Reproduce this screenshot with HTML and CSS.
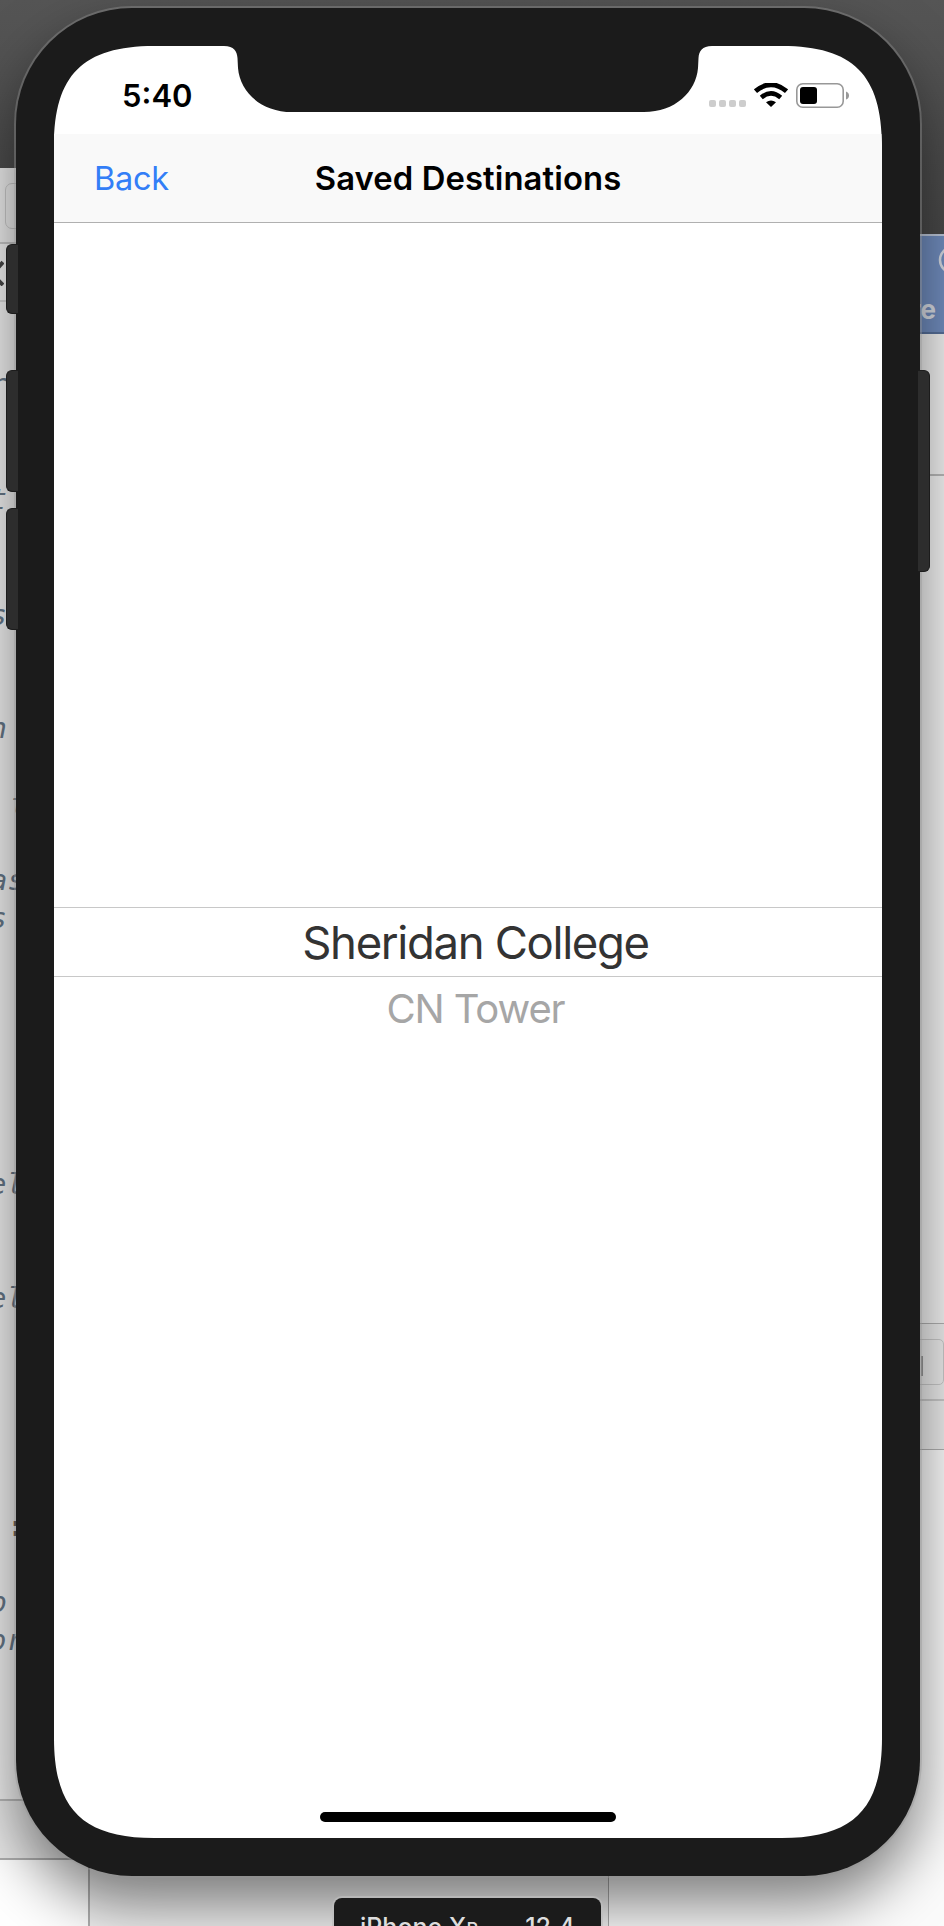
FILE: index.html
```
<!DOCTYPE html>
<html lang="en">
<head>
<meta charset="utf-8">
<title>Saved Destinations</title>
<link rel="stylesheet" href="styles.css">
</head>
<body>
<main class="desktop">
  <section class="window editor">
    <div class="editor-tools"><span class="tool-button"></span></div>
    <div class="editor-path"><svg width="8" height="26" viewBox="0 0 8 26"><path d="M7 2L0 10M0 18l7 7" fill="none" stroke="#444" stroke-width="4"/></svg></div>
    <span class="code c1">r</span><span class="code c2">t</span><span class="code c3">s</span>
    <span class="code c4">n</span><span class="code c5">t</span><span class="code c6">as</span><span class="code c7">s</span>
    <span class="code c8">el</span><span class="code c9">el</span><span class="code c10">:</span>
    <span class="code c11">o</span><span class="code c12">or</span>
  </section>
  <section class="window debug"></section>
  <section class="window console"></section>
  <section class="window paper"></section>
  <section class="window browser">
    <header class="browser-head"><svg class="ring" width="30" height="30" viewBox="0 0 30 30"><circle cx="15" cy="15" r="13" fill="none" stroke="#d3d7df" stroke-width="2.5"/></svg><span>re</span></header>
    <div class="browser-strip"></div>
    <div class="browser-page"></div>
    <div class="browser-bar"><span class="bar-field"><i class="bar-mark"></i></span></div>
    <div class="browser-row"></div>
  </section>

  <i class="key mute"></i><i class="key vol-up"></i><i class="key vol-down"></i><i class="key power"></i>

  <article class="phone">
    <div class="screen">
      <div class="status">
        <time class="clock">5:40</time>
        <div class="signals">
          <span class="dots"><i></i><i></i><i></i><i></i></span>
          <svg width="34" height="24" viewBox="0 0 34 24"><path d="M1.500 8.200Q17-4.800 32.500 8.200" fill="none" stroke="#000" stroke-width="4.800"/><path d="M7.300 14.500Q17 6.300 26.700 14.500" fill="none" stroke="#000" stroke-width="4.600"/><path d="M12 19.200Q17 15.600 22 19.200L17 24z"/></svg>
          <svg class="battery" width="54" height="26" viewBox="0 0 54 26"><rect x=".8" y=".8" width="46.400" height="23.400" rx="6" fill="none" stroke="#989898" stroke-width="1.600"/><rect x="4" y="4" width="17" height="17" rx="3"/><path d="M50 8.500q3 1 3 4t-3 4z" fill="#989898"/></svg>
        </div>
      </div>
      <nav class="navbar"><a class="back">Back</a><h1 class="title">Saved Destinations</h1><span></span></nav>
      <div class="picker">
        <div class="option selected"><span>Sheridan College</span></div>
        <div class="option next"><span>CN Tower</span></div>
      </div>
      <div class="home"></div>
    </div>
  </article>
  <footer class="device-label"><span>iPhone X<small>R</small></span><span class="dash">—</span><span>12.4</span></footer>
</main>
</body>
</html>
```
FILE: styles.css
```
* { box-sizing: border-box; }
body { margin: 0; font-family: Inter, "Liberation Sans", sans-serif; }
i { display: block; }
.desktop { position: relative; width: 944px; height: 1926px; padding: 8px 24px 50px 16px; overflow: hidden; background: linear-gradient(#555, #484848 230px); }

.window { position: absolute; overflow: hidden; }
.editor { left: 0; top: 168px; width: 40px; height: 1633px; background: #f0f0f0; border-bottom: 2px solid #b8b8b8; }
.editor-tools { height: 76px; padding: 15px 0 0 5px; background: #ececec; border-bottom: 2px solid #c4c4c4; }
.tool-button { display: block; width: 60px; height: 46px; border: 1px solid #c8c8c8; border-radius: 7px; }
.editor-path { height: 58px; padding-top: 16px; margin-left: -4px; border-bottom: 2px solid #d4d4d4; }
.code { position: absolute; right: 33px; font: italic 400 29px/44px "DejaVu Sans Mono", monospace; color: #657687; }
.c1 { top: 194px; } .c2 { top: 309px; } .c3 { top: 425px; } .c4 { top: 538px; }
.c5 { top: 614px; right: 12px; } .c6 { top: 690px; right: 15px; } .c7 { top: 728px; }
.c8 { top: 994px; right: 16px; } .c9 { top: 1108px; right: 16px; }
.c10 { top: 1336px; right: 15px; color: #222; font-style: normal; font-weight: 700; }
.c11 { top: 1412px; } .c12 { top: 1450px; right: 16px; }
.debug { left: 0; top: 1801px; width: 130px; height: 59px; background: #e6e6e6; border-bottom: 2px solid #adadad; }
.console { left: 0; top: 1860px; width: 90px; height: 66px; background: #fff; border-right: 2px solid #b0b0b0; }
.paper { left: 90px; top: 1860px; width: 519px; height: 66px; background: #f0f0f0; border-right: 1px solid #aaa; }
.browser { left: 609px; top: 234px; width: 335px; height: 1692px; background: #fbfbfb; }
.browser-head { height: 100px; padding: 58px 8px 0 0; text-align: right; font: 700 26px/32px Inter, sans-serif; color: #d8dce4; background: #708cbd; border-top: 2px solid #bcc6d8; border-bottom: 2px solid #566f99; }
.ring { position: absolute; left: 329px; top: 11px; }
.browser-strip { height: 142px; background: #f0f0f0; border-bottom: 2px solid #b7b7b7; }
.browser-page { height: 848px; background: #f2f2f2; border-bottom: 1px solid #b0b0b0; }
.browser-bar { height: 77px; padding-top: 15px; background: #ececec; border-bottom: 2px solid #c9c9c9; }
.bar-field { display: block; height: 46px; padding: 16px 0 0 311px; border: 1px solid #c9c9c9; border-radius: 5px; }
.bar-mark { width: 2px; height: 20px; background: #999; }
.browser-row { height: 49px; background: #ececec; border-bottom: 1px solid #b0b0b0; }

.key { position: absolute; z-index: 2; width: 12px; background: #2d2d2d; border: 1px solid #1c1c1c; }
.mute, .vol-up, .vol-down { left: 6px; border-right: 0; border-radius: 6px 0 0 6px; }
.mute { top: 244px; height: 70px; }
.vol-up { top: 370px; height: 122px; }
.vol-down { top: 508px; height: 122px; }
.power { left: 918px; top: 370px; height: 202px; border-left: 0; border-radius: 0 6px 6px 0; }

.phone { position: relative; width: 904px; height: 1868px; padding: 38px; background: #1b1b1b; border-radius: 116px; box-shadow: 0 0 0 2px rgba(150,150,150,.4), 0 28px 60px rgba(0,0,0,.5); }
.screen { display: flex; flex-direction: column; width: 828px; height: 1792px; background: #fff; clip-path: path("M0 100C0 29 29 0 100 0H170C180 0 183 5 183.500 12L184 22C186 46 207 66 238 66H590C621 66 642 46 644 22L644.500 12C645 5 648 0 658 0H728C799 0 828 29 828 100V1692C828 1763 799 1792 728 1792H100C29 1792 0 1763 0 1692Z"); }
.status { display: flex; justify-content: space-between; height: 88px; padding: 30px 32px 0 68px; }
.clock { font-size: 31px; font-weight: 600; line-height: 40px; }
.signals { display: flex; padding-top: 7px; }
.dots { display: flex; gap: 3px; padding-top: 17px; margin-right: 8px; }
.dots i { width: 7px; height: 7px; border-radius: 2px; background: #cdcdcd; }
.battery { margin-left: 8px; }
.navbar { display: grid; grid-template-columns: 1fr auto 1fr; align-items: center; height: 89px; padding: 0 40px; background: #f9f9f9; border-bottom: 1px solid #b0b0b0; }
.back { font-size: 32.500px; letter-spacing: -.3px; color: #337ef7; }
.title { margin: 0; font-size: 32.800px; font-weight: 600; letter-spacing: .1px; }
.picker { flex: 1; padding-top: 684px; text-align: center; }
.option { padding-left: 15px; white-space: nowrap; }
.selected { height: 70px; font-size: 45.500px; line-height: 70px; letter-spacing: -1.350px; color: #333; border-top: 1px solid #c8c8c8; border-bottom: 1px solid #c8c8c8; }
.next { font-size: 40px; line-height: 64px; letter-spacing: -1.100px; color: #a6a6a6; }
.home { width: 296px; height: 10px; margin: 0 auto 16px; border-radius: 5px; background: #000; }

.device-label { position: absolute; left: 334px; top: 1898px; display: flex; width: 267px; height: 60px; padding: 12px 26px; justify-content: space-between; font-size: 25px; font-weight: 500; line-height: 34px; white-space: nowrap; color: #ddd; background: #1b1b1b; border-radius: 8px 8px 0 0; box-shadow: 0 0 0 2px rgba(190,190,190,.7); }
.device-label small { font-size: 18px; }
.dash { font-size: 18px; }
```
